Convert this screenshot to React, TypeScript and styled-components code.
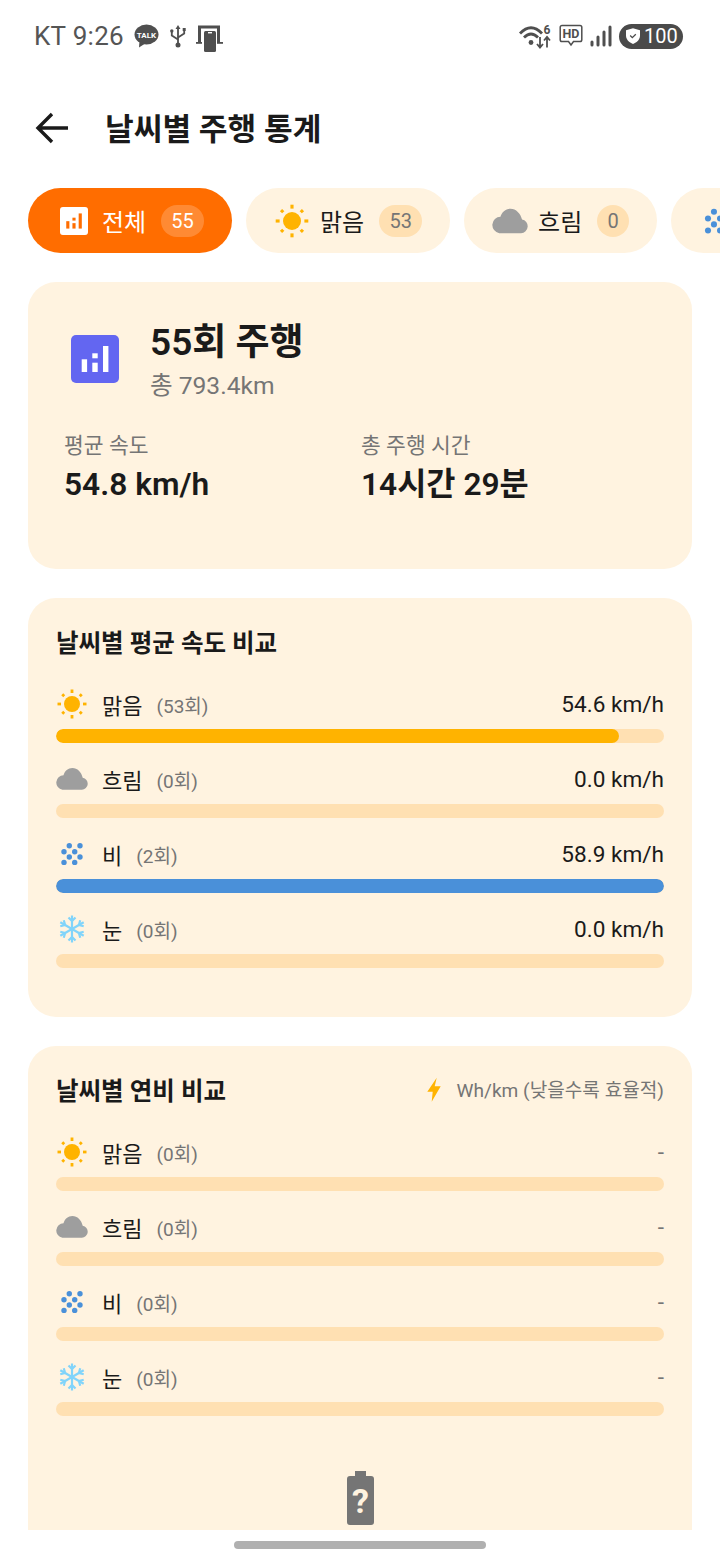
import React from "react";
import styled, { createGlobalStyle } from "styled-components";

type Weather = "sun" | "cloud" | "rain" | "snow";

interface Row {
  weather: Weather;
  name: string;
  count: number;
  value: string;
  percent: number;
}

const chips = [
  { weather: "sun" as Weather, name: "맑음", count: 53 },
  { weather: "cloud" as Weather, name: "흐림", count: 0 },
  { weather: "rain" as Weather, name: "비", count: 2 },
];

const speedRows: Row[] = [
  { weather: "sun", name: "맑음", count: 53, value: "54.6 km/h", percent: 92.6 },
  { weather: "cloud", name: "흐림", count: 0, value: "0.0 km/h", percent: 0 },
  { weather: "rain", name: "비", count: 2, value: "58.9 km/h", percent: 100 },
  { weather: "snow", name: "눈", count: 0, value: "0.0 km/h", percent: 0 },
];

const efficiencyRows: Row[] = [
  { weather: "sun", name: "맑음", count: 0, value: "-", percent: 0 },
  { weather: "cloud", name: "흐림", count: 0, value: "-", percent: 0 },
  { weather: "rain", name: "비", count: 0, value: "-", percent: 0 },
  { weather: "snow", name: "눈", count: 0, value: "-", percent: 0 },
];

const barColors: Record<Weather, string> = {
  sun: "#ffb300",
  cloud: "#9e9e9e",
  rain: "#4a90d9",
  snow: "#81d4fa",
};

const WeatherIcon = ({ weather, size }: { weather: Weather; size: number }) => {
  if (weather === "sun") {
    const rays = [0, 45, 90, 135, 180, 225, 270, 315];
    return (
      <svg width={size} height={size} viewBox="0 0 32 32">
        <circle cx="16" cy="16" r="8" fill="#ffb300" />
        {rays.map((r) => (
          <line
            key={r}
            x1="16"
            y1={r % 90 === 0 ? 1.5 : 2.2}
            x2="16"
            y2="5"
            stroke="#ffb300"
            strokeWidth="2.8"
            transform={`rotate(${r} 16 16)`}
          />
        ))}
      </svg>
    );
  }
  if (weather === "cloud") {
    return (
      <svg width={size} height={size} viewBox="0 0 32 32">
        <path
          d="M6.4 26.8h19.4a6.1 6.1 0 0 0 .9-12.1C25.4 9.2 21.4 5 16.4 5c-4.300 0-7.700 3-8.900 7.300A7.300 7.300 0 0 0 6.400 26.800z"
          fill="#9e9e9e"
        />
      </svg>
    );
  }
  if (weather === "rain") {
    const dots = [
      [13.3, 7.7],
      [24, 7.7],
      [8, 13.7],
      [18.7, 13.7],
      [13.3, 19],
      [24, 19],
      [8, 24.4],
      [18.7, 24.4],
    ];
    return (
      <svg width={size} height={size} viewBox="0 0 32 32">
        {dots.map(([x, y]) => (
          <circle key={`${x}-${y}`} cx={x} cy={y} r="2.7" fill="#4a90d9" />
        ))}
      </svg>
    );
  }
  return (
    <svg width={size} height={size} viewBox="0 0 32 32">
      {[0, 60, 120].map((r) => (
        <g key={r} transform={`rotate(${r} 16 16)`} stroke="#81d4fa" strokeWidth="2.2" fill="none">
          <line x1="16" y1="2.500" x2="16" y2="29.500" />
          <path d="M12.500 4.500l3.500 3.500 3.500-3.500M12.500 27.500l3.500-3.500 3.500 3.500" />
        </g>
      ))}
    </svg>
  );
};

const ChartIcon = ({ size, bg, fg }: { size: number; bg: string; fg: string }) => (
  <svg width={size} height={size} viewBox="0 0 48 48">
    <rect width="48" height="48" rx="5" fill={bg} />
    <rect x="10.700" y="24.300" width="5.400" height="12.700" fill={fg} />
    <rect x="21.300" y="18.300" width="5.400" height="5" fill={fg} />
    <rect x="21.300" y="27.700" width="5.400" height="9.300" fill={fg} />
    <rect x="32" y="11" width="5.400" height="26" fill={fg} />
  </svg>
);

const StatRows = ({ rows }: { rows: Row[] }) => (
  <RowList>
    {rows.map((row) => (
      <RowItem key={row.name}>
        <RowHead>
          <RowIcon>
            <WeatherIcon weather={row.weather} size={32} />
          </RowIcon>
          <RowName>{row.name}</RowName>
          <RowCount>({row.count}회)</RowCount>
          <RowValue $muted={row.value === "-"}>{row.value}</RowValue>
        </RowHead>
        <Track>
          {row.percent > 0 && <Fill $color={barColors[row.weather]} $percent={row.percent} />}
        </Track>
      </RowItem>
    ))}
  </RowList>
);

const App = () => {
  return (
    <Screen>
      <GlobalStyle />
      <StatusBar>
        <StatusGroup>
          <Clock>KT 9:26</Clock>
          <svg width="25" height="24" viewBox="0 0 25 24">
            <ellipse cx="12.500" cy="10.500" rx="12" ry="10" fill="#4f4f4f" />
            <path d="M5.500 17l-.5 6.500L12 19z" fill="#4f4f4f" />
            <text x="12.500" y="13.500" fontSize="8" fontWeight="700" fill="#fff" textAnchor="middle" fontFamily="Roboto">
              TALK
            </text>
          </svg>
          <UsbIcon width="16" height="23" viewBox="0 0 16 23">
            <g fill="none" stroke="#4f4f4f" strokeWidth="1.800">
              <path d="M8 3v17" />
              <path d="M1.800 7v3.500L8 14.500" />
              <path d="M14.200 5.500v3L8 12.500" />
            </g>
            <path d="M8 0l2.500 4h-5z" fill="#4f4f4f" />
            <circle cx="8" cy="20" r="2.500" fill="#4f4f4f" />
            <circle cx="1.800" cy="6" r="1.700" fill="#4f4f4f" />
            <rect x="12.700" y="3" width="3" height="3" fill="#4f4f4f" />
          </UsbIcon>
          <CastIcon width="27" height="27" viewBox="0 0 27 27">
            <path d="M2 .5h22V17h-3V3.500H5V17H2z" fill="#4f4f4f" />
            <rect x="8" y="6" width="12" height="21" rx="1.500" fill="#4f4f4f" />
            <rect x="12" y="7" width="4" height="1.400" fill="#fff" />
            <rect x="0" y="17" width="6" height="1.800" fill="#4f4f4f" />
            <rect x="21" y="17" width="6" height="1.800" fill="#4f4f4f" />
          </CastIcon>
        </StatusGroup>
        <StatusGroup>
          <svg width="34" height="26" viewBox="0 0 34 26">
            <g fill="none" stroke="#4f4f4f" strokeWidth="2.800">
              <path d="M2 10.500Q13-1 24 10.500" />
              <path d="M6 14.500Q13 7.500 20 14.500" />
            </g>
            <circle cx="13" cy="19.500" r="2.400" fill="#4f4f4f" />
            <text x="29" y="11" fontSize="12" fontWeight="700" fill="#4f4f4f" textAnchor="middle" fontFamily="Roboto">
              6
            </text>
            <path d="M22 14v10M19 21l3 3.500 3-3.500M29 24.500V14.500M26 17.500l3-3.500 3 3.500" fill="none" stroke="#4f4f4f" strokeWidth="1.800" />
          </svg>
          <svg width="24" height="24" viewBox="0 0 24 24">
            <path d="M3 1.500h18a1.800 1.800 0 0 1 1.800 1.800v12.400a1.800 1.800 0 0 1-1.800 1.800h-6.500L12 21l-2.500-3.500H3a1.800 1.800 0 0 1-1.800-1.800V3.300A1.800 1.800 0 0 1 3 1.500z" fill="none" stroke="#4f4f4f" strokeWidth="1.500" />
            <text x="12" y="14" fontSize="12.500" fontWeight="700" fill="#4f4f4f" textAnchor="middle" fontFamily="Roboto">
              HD
            </text>
          </svg>
          <svg width="22" height="22" viewBox="0 0 22 22">
            <g stroke="#4f4f4f" strokeWidth="3" strokeLinecap="round">
              <line x1="2" y1="17" x2="2" y2="20" />
              <line x1="8" y1="12" x2="8" y2="20" />
              <line x1="14" y1="7" x2="14" y2="20" />
              <line x1="20" y1="2" x2="20" y2="20" />
            </g>
          </svg>
          <BatteryPill>
            <svg width="14" height="16" viewBox="0 0 16 18">
              <path d="M8 0l8 2.500v6C16 13 12.500 16.500 8 18 3.500 16.500 0 13 0 8.500v-6z" fill="#fff" />
              <path d="M4.800 8.500l2.400 2.400 4-4" fill="none" stroke="#4a4a4a" strokeWidth="1.500" />
            </svg>
            <BatteryText>100</BatteryText>
          </BatteryPill>
        </StatusGroup>
      </StatusBar>

      <Header>
        <svg width="34" height="32" viewBox="0 0 34 32">
          <path d="M33 16H3M17 2 3 16l14 14" fill="none" stroke="#1a1a1a" strokeWidth="3.400" />
        </svg>
        <Title>날씨별 주행 통계</Title>
      </Header>

      <ChipRow>
        <Chip $active>
          <ChipIcon>
            <ChartIcon size={28} bg="#ffffff" fg="#ff6d00" />
          </ChipIcon>
          <ChipLabel $active>전체</ChipLabel>
          <ChipBadge $active>55</ChipBadge>
        </Chip>
        {chips.map((chip) => (
          <Chip key={chip.name}>
            <ChipIcon>
              <WeatherIcon weather={chip.weather} size={36} />
            </ChipIcon>
            <ChipLabel>{chip.name}</ChipLabel>
            <ChipBadge>{chip.count}</ChipBadge>
          </Chip>
        ))}
      </ChipRow>

      <Content>
        <SummaryCard>
          <SummaryHead>
            <SummaryIcon>
              <ChartIcon size={48} bg="#6366f1" fg="#ffffff" />
            </SummaryIcon>
            <div>
              <SummaryTitle>55회 주행</SummaryTitle>
              <SummarySub>총 793.4km</SummarySub>
            </div>
          </SummaryHead>
          <SummaryGrid>
            <div>
              <StatLabel>평균 속도</StatLabel>
              <StatValue>54.8 km/h</StatValue>
            </div>
            <div>
              <StatLabel>총 주행 시간</StatLabel>
              <StatValue>14시간 29분</StatValue>
            </div>
          </SummaryGrid>
        </SummaryCard>

        <SpeedCard>
          <CardHead>
            <CardTitle>날씨별 평균 속도 비교</CardTitle>
          </CardHead>
          <StatRows rows={speedRows} />
        </SpeedCard>

        <EfficiencyCard>
          <CardHead>
            <CardTitle>날씨별 연비 비교</CardTitle>
            <Hint>
              <svg width="14" height="25" viewBox="0 0 14 25">
                <path d="M9.700.7.300 14.700h5.400l-1 10 9-15.400h-6z" fill="#ffb300" />
              </svg>
              <HintText>Wh/km (낮을수록 효율적)</HintText>
            </Hint>
          </CardHead>
          <StatRows rows={efficiencyRows} />
          <EmptyState>
            <svg width="27" height="54" viewBox="0 0 27 54">
              <path d="M8 0h11v5h5a3 3 0 0 1 3 3v43a3 3 0 0 1-3 3H3a3 3 0 0 1-3-3V8a3 3 0 0 1 3-3h5z" fill="#757575" />
              <text x="13.500" y="42" fontSize="34" fontWeight="700" fill="#fff3e0" textAnchor="middle" fontFamily="Roboto">
                ?
              </text>
            </svg>
          </EmptyState>
        </EfficiencyCard>
      </Content>

      <HomeBar />
    </Screen>
  );
};

const GlobalStyle = createGlobalStyle`
  html, body {
    margin: 0;
    padding: 0;
    background: #fff;
  }
  * {
    box-sizing: border-box;
  }
  body {
    font-family: Roboto, "Noto Sans CJK KR", sans-serif;
    color: #1a1a1a;
  }
`;

const Screen = styled.div`
  width: 720px;
  height: 1560px;
  overflow: hidden;
  background: #fff;
  display: flex;
  flex-direction: column;
`;

const StatusBar = styled.div`
  height: 72px;
  padding: 0 37px 0 34px;
  display: flex;
  align-items: center;
  justify-content: space-between;
  flex-shrink: 0;
`;

const StatusGroup = styled.div`
  display: flex;
  align-items: center;
  gap: 7px;
`;

const Clock = styled.span`
  font-size: 26px;
  color: #555;
  margin-right: 3px;
  letter-spacing: 0.3px;
`;

const UsbIcon = styled.svg`
  margin-left: 4px;
`;

const CastIcon = styled.svg`
  margin: 4px 0 0 3px;
`;

const BatteryPill = styled.div`
  width: 64px;
  height: 25px;
  border-radius: 13px;
  background: #4a4a4a;
  display: flex;
  align-items: center;
  gap: 4px;
  padding-left: 7px;
`;

const BatteryText = styled.span`
  color: #fff;
  font-size: 20px;
  line-height: 25px;
`;

const Header = styled.div`
  height: 112px;
  padding: 0 0 0 35px;
  display: flex;
  align-items: center;
  gap: 36px;
  flex-shrink: 0;
`;

const Title = styled.h1`
  margin: 0 0 4px;
  font-size: 31.2px;
  font-weight: 600;
  color: #1a1a1a;
`;

const ChipRow = styled.div`
  margin-top: 4px;
  padding-left: 28px;
  display: flex;
  gap: 14px;
  flex-shrink: 0;
  overflow: hidden;
`;

const Chip = styled.div<{ $active?: boolean }>`
  height: 65px;
  padding: 0 28px;
  border-radius: 33px;
  display: flex;
  align-items: center;
  flex-shrink: 0;
  background: ${({ $active }) => ($active ? "#ff6d00" : "#fff3e0")};
`;

const ChipIcon = styled.div`
  width: 36px;
  height: 36px;
  margin-right: 10px;
  display: flex;
  align-items: center;
  justify-content: center;
`;

const ChipLabel = styled.span<{ $active?: boolean }>`
  font-size: 24px;
  color: ${({ $active }) => ($active ? "#fff" : "#1a1a1a")};
`;

const ChipBadge = styled.span<{ $active?: boolean }>`
  min-width: 32px;
  height: 32px;
  margin-left: 15px;
  padding: 0 10.2px;
  border-radius: 16px;
  display: flex;
  align-items: center;
  justify-content: center;
  font-size: 20px;
  background: ${({ $active }) => ($active ? "rgba(255,255,255,0.2)" : "#ffe0b2")};
  color: ${({ $active }) => ($active ? "#fff" : "#757575")};
`;

const Content = styled.div`
  height: 1277px;
  padding: 29px 28px 0;
  overflow: hidden;
  display: flex;
  flex-direction: column;
  gap: 29px;
  flex-shrink: 0;
`;

const Card = styled.section`
  background: #fff3e0;
  border-radius: 28px;
  flex-shrink: 0;
`;

const SummaryCard = styled(Card)`
  height: 287px;
  padding: 36px 36px 0;
`;

const SummaryHead = styled.div`
  display: flex;
  align-items: center;
  gap: 31px;
  padding-left: 7px;
`;

const SummaryIcon = styled.div`
  height: 48px;
  margin-bottom: 4px;
`;

const SummaryTitle = styled.div`
  font-size: 37px;
  line-height: 50px;
  font-weight: 600;
  color: #1a1a1a;
`;

const SummarySub = styled.div`
  font-size: 24.6px;
  line-height: 36px;
  color: #757575;
`;

const SummaryGrid = styled.div`
  margin-top: 27px;
  display: grid;
  grid-template-columns: 297px 1fr;
`;

const StatLabel = styled.div`
  font-size: 21.5px;
  line-height: 30px;
  color: #757575;
`;

const StatValue = styled.div`
  margin-top: 3px;
  font-size: 31.7px;
  line-height: 42px;
  font-weight: 600;
  color: #1a1a1a;
`;

const SpeedCard = styled(Card)`
  height: 419px;
  padding: 26px 28px 0;
`;

const EfficiencyCard = styled(Card)`
  height: 600px;
  padding: 26px 28px 0;
`;

const CardHead = styled.div`
  height: 34px;
  display: flex;
  align-items: center;
  justify-content: space-between;
`;

const CardTitle = styled.h2`
  margin: 0;
  font-size: 24.5px;
  font-weight: 600;
  color: #1a1a1a;
`;

const Hint = styled.div`
  display: flex;
  align-items: center;
  gap: 16px;
`;

const HintText = styled.span`
  font-size: 19.1px;
  color: #757575;
`;

const RowList = styled.div`
  margin-top: 30px;
  display: flex;
  flex-direction: column;
  gap: 20px;
`;

const RowItem = styled.div`
  display: flex;
  flex-direction: column;
  gap: 9px;
`;

const RowHead = styled.div`
  height: 32px;
  display: flex;
  align-items: center;
`;

const RowIcon = styled.div`
  width: 32px;
  height: 32px;
  margin-right: 14px;
`;

const RowName = styled.span`
  font-size: 22px;
  color: #1a1a1a;
`;

const RowCount = styled.span`
  margin-left: 14px;
  font-size: 19px;
  color: #757575;
`;

const RowValue = styled.span<{ $muted?: boolean }>`
  margin-left: auto;
  font-size: 22.6px;
  color: ${({ $muted }) => ($muted ? "#757575" : "#1a1a1a")};
`;

const Track = styled.div`
  height: 14px;
  border-radius: 7px;
  background: #ffe0b2;
  overflow: hidden;
`;

const Fill = styled.div<{ $color: string; $percent: number }>`
  height: 100%;
  width: ${({ $percent }) => $percent}%;
  border-radius: 7px;
  background: ${({ $color }) => $color};
`;

const EmptyState = styled.div`
  margin-top: 55px;
  display: flex;
  justify-content: center;
`;

const HomeBar = styled.div`
  width: 252px;
  height: 8px;
  margin: 11px auto 0;
  border-radius: 4px;
  background: #b0b0b0;
  flex-shrink: 0;
`;

export default App;
